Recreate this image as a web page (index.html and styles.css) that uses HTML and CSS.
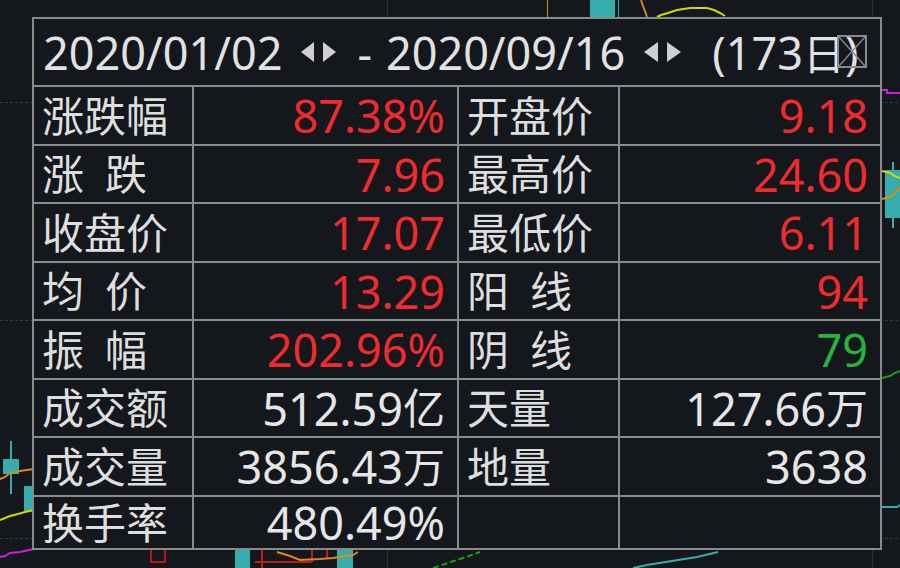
FILE: index.html
```html
<!DOCTYPE html>
<html lang="zh-CN">
<head>
<meta charset="utf-8">
<title>区间统计</title>
<link rel="stylesheet" href="styles.css">
</head>
<body>
<div class="stage">
  <svg class="chart" width="900" height="568" viewBox="0 0 900 568">
    <g stroke="#34373c" stroke-width="1" stroke-dasharray="3 2">
      <line x1="0" y1="102.5" x2="900" y2="102.5"/>
      <line x1="0" y1="320.5" x2="900" y2="320.5"/>
      <line x1="0" y1="538.5" x2="900" y2="538.5"/>
    </g>
    <g stroke="#2c2f34" stroke-width="1">
      <line x1="387.5" y1="0" x2="387.5" y2="568"/>
      <line x1="872.5" y1="0" x2="872.5" y2="568"/>
    </g>
    <!-- top -->
    <line x1="547.5" y1="0" x2="547.5" y2="17" stroke="#d98a1a" stroke-width="1"/>
    <rect x="590" y="0" width="25" height="17" fill="#35adad"/>
    <line x1="618.5" y1="0" x2="618.5" y2="17" stroke="#35adad" stroke-width="1"/>
    <polyline points="641,0 643,6 645,11 647,17" fill="none" stroke="#d98a1a" stroke-width="2"/>
    <polyline points="657,17 661,15 668,13 677,10 690,8 707,8 714,10 720,13 725,16" fill="none" stroke="#d6d600" stroke-width="2"/>
    <!-- right -->
    <polyline points="882,90 887,90 887,93 900,93" fill="none" stroke="#d21fd2" stroke-width="2"/>
    <line x1="893" y1="162" x2="893" y2="228" stroke="#35adad" stroke-width="2"/>
    <rect x="885" y="170" width="15" height="48" fill="#35adad"/>
    <polyline points="882,171 890,173 895,176 900,178" fill="none" stroke="#d6d600" stroke-width="2"/>
    <polyline points="882,199 890,197 895,193 900,187" fill="none" stroke="#d98a1a" stroke-width="2"/>
    <polyline points="882,378 890,376 895,373 900,371" fill="none" stroke="#159a15" stroke-width="2"/>
    <polyline points="882,507 897,507 900,505" fill="none" stroke="#35adad" stroke-width="2"/>
    <!-- bottom -->
    <rect x="151" y="545" width="14" height="17" fill="none" stroke="#b01818" stroke-width="2"/>
    <rect x="235" y="549" width="15" height="19" fill="#35adad"/>
    <g stroke="#c01a1a" stroke-width="2">
      <line x1="262" y1="550" x2="262" y2="568"/>
      <line x1="255" y1="562" x2="312" y2="562"/>
      <line x1="312" y1="550" x2="312" y2="562"/>
      <line x1="327" y1="550" x2="327" y2="558"/>
    </g>
    <rect x="337" y="550" width="16" height="18" fill="#35adad"/>
    <polyline points="277,552 290,556 300,560 320,559 333,558 345,556 353,555 358,552" fill="none" stroke="#d98a1a" stroke-width="2"/>
    <polyline points="433,568 445,564 457,560 469,556 480,552" fill="none" stroke="#18a018" stroke-width="2" stroke-dasharray="6 3"/>
    <polyline points="633,568 647,565 672,561 697,557 718,552" fill="none" stroke="#35adad" stroke-width="2"/>
    <!-- left -->
    <line x1="11" y1="441" x2="11" y2="494" stroke="#35adad" stroke-width="2"/>
    <rect x="3" y="459" width="16" height="15" fill="#35adad"/>
    <rect x="24" y="486" width="10" height="25" fill="#35adad"/>
    <polyline points="0,479 5,477 10,473 20,471 34,469" fill="none" stroke="#d98a1a" stroke-width="2"/>
    <polyline points="0,520 5,518 10,516 18,514 25,512 34,510" fill="none" stroke="#d6d600" stroke-width="2"/>
    <polyline points="0,557 5,556 10,553 20,552 34,549" fill="none" stroke="#d21fd2" stroke-width="2"/>
  </svg>

  <div class="panel">
    <div class="head">
      <span class="date">2020/01/02</span>
      <span class="arrows">
        <svg width="36" height="22" viewBox="0 0 36 22"><polygon points="13,1 13,21 0,11" fill="#d0d0d0"/><polygon points="22,1 22,21 35,11" fill="#d0d0d0"/></svg>
      </span>
      <span class="dash">-</span>
      <span class="date">2020/09/16</span>
      <span class="arrows">
        <svg width="38" height="22" viewBox="0 0 38 22"><polygon points="14,1 14,21 0,11" fill="#d0d0d0"/><polygon points="23,1 23,21 37,11" fill="#d0d0d0"/></svg>
      </span>
      <span class="days">(173<span class="u">日</span>)</span>
      <span class="close">
        <svg width="26" height="29" viewBox="0 0 26 29"><line x1="0" y1="0" x2="26" y2="29" stroke="#8a8a8a" stroke-width="1.5"/><line x1="26" y1="0" x2="0" y2="29" stroke="#8a8a8a" stroke-width="1.5"/></svg>
      </span>
    </div>

    <div class="cell label">涨跌幅</div>
    <div class="cell val red">87.38%</div>
    <div class="cell label">开盘价</div>
    <div class="cell val red">9.18</div>

    <div class="cell label">涨&ensp;跌</div>
    <div class="cell val red">7.96</div>
    <div class="cell label">最高价</div>
    <div class="cell val red">24.60</div>

    <div class="cell label">收盘价</div>
    <div class="cell val red">17.07</div>
    <div class="cell label">最低价</div>
    <div class="cell val red">6.11</div>

    <div class="cell label">均&ensp;价</div>
    <div class="cell val red">13.29</div>
    <div class="cell label">阳&ensp;线</div>
    <div class="cell val red">94</div>

    <div class="cell label">振&ensp;幅</div>
    <div class="cell val red">202.96%</div>
    <div class="cell label">阴&ensp;线</div>
    <div class="cell val green">79</div>

    <div class="cell label">成交额</div>
    <div class="cell val">512.59<span class="u">亿</span></div>
    <div class="cell label">天量</div>
    <div class="cell val">127.66<span class="u">万</span></div>

    <div class="cell label">成交量</div>
    <div class="cell val">3856.43<span class="u">万</span></div>
    <div class="cell label">地量</div>
    <div class="cell val">3638</div>

    <div class="cell label">换手率</div>
    <div class="cell val">480.49%</div>
    <div class="cell label"></div>
    <div class="cell val"></div>
  </div>
</div>
</body>
</html>
```

FILE: styles.css
```css
html, body {
  margin: 0;
  padding: 0;
  background: #14171c;
}

body {
  width: 900px;
  height: 568px;
  overflow: hidden;
  font-family: "Noto Sans", "Noto Sans CJK SC", sans-serif;
}

.stage {
  position: relative;
  width: 900px;
  height: 568px;
  padding: 17px 0 0 32px;
  box-sizing: border-box;
}

.chart {
  position: absolute;
  left: 0;
  top: 0;
}

.panel {
  position: relative;
  width: 850px;
  box-sizing: border-box;
  display: grid;
  grid-template-columns: 158px 263px 159px 260px;
  grid-template-rows: 66px 57px 56px 57px 56px 57px 56px 57px 51px;
  gap: 2px;
  padding: 2px;
  background: #8a8a8a;
}

.head {
  grid-column: 1 / -1;
  position: relative;
  display: flex;
  align-items: center;
  padding-left: 9px;
  background: #14171c;
  color: #e2e2e2;
  font-size: 45px;
  line-height: 1;
  white-space: nowrap;
}

.arrows {
  display: flex;
  align-items: center;
  margin-left: 19px;
}

.arrows svg {
  display: block;
}

.dash {
  margin-left: 20px;
}

.head .dash + .date {
  margin-left: 14px;
}

.head .arrows + .days {
  margin-left: 30px;
}

.close {
  position: absolute;
  right: 13px;
  top: 16px;
  width: 26px;
  height: 29px;
  border: 2px solid #8a8a8a;
}

.close svg {
  display: block;
}

.cell {
  display: flex;
  align-items: center;
  background: #14171c;
  font-size: 45px;
  line-height: 1;
  white-space: nowrap;
}

.u {
  font-size: 42px;
}

.label {
  padding-left: 8px;
  font-size: 42px;
  color: #dedede;
}

.val {
  justify-content: flex-end;
  padding-right: 12px;
  color: #e6e6e6;
}

.red {
  color: #f02a2d;
}

.green {
  color: #25b53e;
}
```
